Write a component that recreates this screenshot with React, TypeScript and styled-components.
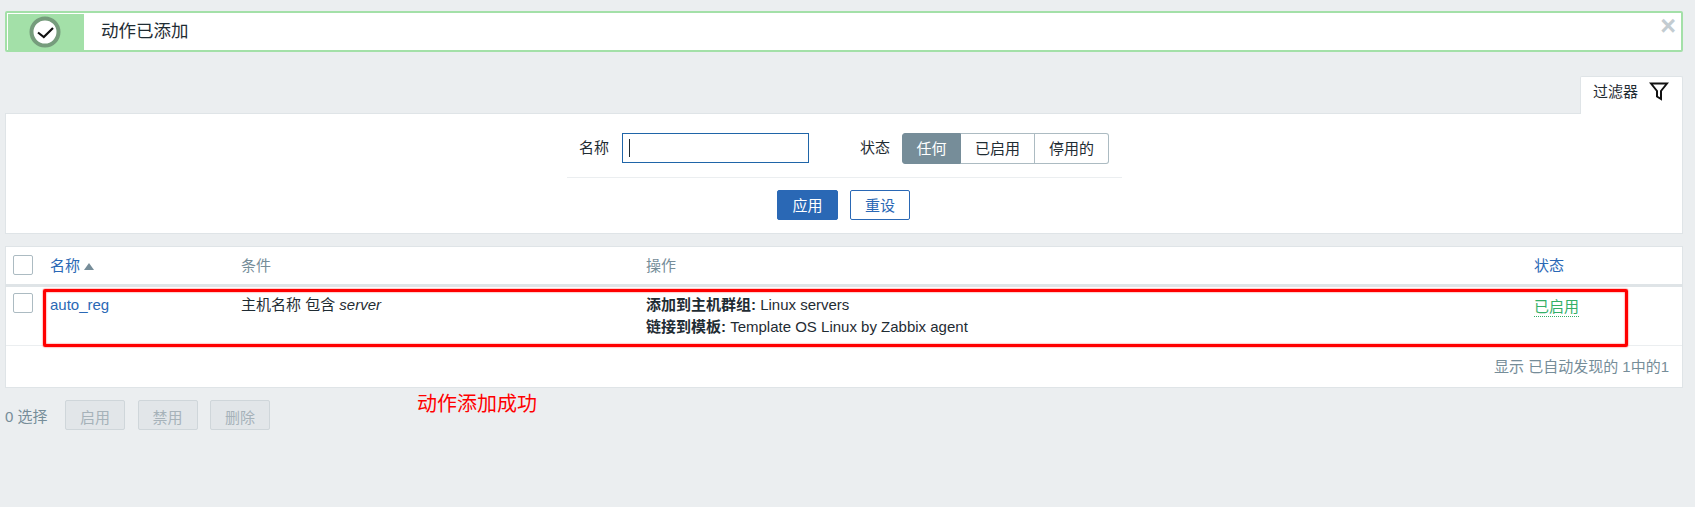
import React from "react"
import styled, { createGlobalStyle } from "styled-components"

const GlobalStyle = createGlobalStyle`
  html, body {
    margin: 0;
    padding: 0;
    background: #ebeef0;
  }
  body {
    font-family: "Liberation Sans", "Noto Sans CJK SC", sans-serif;
    font-size: 15px;
    color: #1f2c33;
  }
`

const Page = styled.div`
  position: relative;
  box-sizing: border-box;
  height: 507px;
  padding: 11px 12px 0 5px;
`

const Message = styled.div`
  position: relative;
  box-sizing: border-box;
  display: flex;
  align-items: stretch;
  height: 41px;
  background: #fff;
  border: 2px solid #a3e0a8;
  border-radius: 2px;
  padding: 1px 0 0 1px;
`

const MessageIcon = styled.div`
  display: flex;
  align-items: center;
  justify-content: center;
  width: 76px;
  padding-right: 3px;
  box-sizing: border-box;
  background: #a3e0a8;
`

const MessageText = styled.div`
  margin-left: 17px;
  font-size: 17.5px;
  line-height: 34px;
  color: #1f2c33;
`

const CloseMark = styled.div`
  position: absolute;
  top: 1px;
  right: 5px;
  font-size: 27px;
  line-height: 24px;
  font-weight: bold;
  color: #c3ccd1;
`

const FilterTabRow = styled.div`
  display: flex;
  justify-content: flex-end;
  margin-top: 24px;
`

const FilterTab = styled.div`
  position: relative;
  z-index: 1;
  box-sizing: border-box;
  display: flex;
  align-items: flex-start;
  width: 103px;
  height: 38px;
  margin-bottom: -1px;
  padding: 5px 0 0 12px;
  background: #fff;
  border: 1px solid #dfe4e7;
  border-bottom: 0;
  border-radius: 2px 2px 0 0;
  line-height: 20px;
  color: #1f2c33;
  svg {
    margin: -1px 0 0 11px;
  }
`

const FilterPanel = styled.div`
  box-sizing: border-box;
  height: 121px;
  background: #fff;
  border: 1px solid #dfe4e7;
  padding-top: 19px;
`

const FilterForm = styled.div`
  box-sizing: border-box;
  display: flex;
  align-items: flex-start;
  width: 555px;
  height: 45px;
  margin-left: 561px;
  padding-left: 12px;
  border-bottom: 1px solid #ebeef0;
`

const FieldLabel = styled.label<{ $gap: number }>`
  line-height: 30px;
  margin-right: ${({ $gap }) => $gap}px;
  color: #1f2c33;
`

const InputBox = styled.div`
  position: relative;
  width: 187px;
  height: 30px;
  margin: 0 51px 0 1px;
  input {
    box-sizing: border-box;
    display: block;
    width: 100%;
    height: 100%;
    margin: 0;
    padding: 0 6px;
    background: #fff;
    border: 1px solid #1f65a8;
    border-radius: 0;
    outline: none;
  }
  &::after {
    content: "";
    position: absolute;
    left: 7px;
    top: 6px;
    width: 1px;
    height: 18px;
    background: #1f2c33;
  }
`

const Segments = styled.div`
  display: flex;
  height: 31px;
`

const Segment = styled.div<{ $active?: boolean; $width: number }>`
  box-sizing: border-box;
  width: ${({ $width }) => $width}px;
  text-align: center;
  line-height: 29px;
  border: 1px solid ${({ $active }) => ($active ? "#768d99" : "#acbbc2")};
  border-left-width: ${({ $active }) => ($active ? 1 : 0)}px;
  background: ${({ $active }) => ($active ? "#768d99" : "#fff")};
  color: ${({ $active }) => ($active ? "#fff" : "#1f2c33")};
  &:first-child {
    border-radius: 3px 0 0 3px;
  }
  &:last-child {
    border-radius: 0 3px 3px 0;
  }
`

const FormActions = styled.div`
  display: flex;
  gap: 12px;
  margin: 12px 0 0 771px;
`

const FormButton = styled.button<{ $primary?: boolean; $width: number }>`
  box-sizing: border-box;
  width: ${({ $width }) => $width}px;
  height: 30px;
  padding: 2px 0 0;
  font: inherit;
  line-height: 26px;
  border: 1px solid #2a68b5;
  border-radius: 2px;
  background: ${({ $primary }) => ($primary ? "#2a68b5" : "#fff")};
  color: ${({ $primary }) => ($primary ? "#fff" : "#2a68b5")};
`

const TablePanel = styled.div`
  box-sizing: border-box;
  height: 142px;
  margin-top: 12px;
  background: #fff;
  border: 1px solid #dfe4e7;
`

const TableRow = styled.div<{ $height: number; $rule: string }>`
  box-sizing: border-box;
  display: grid;
  grid-template-columns: 44px 191px 405px 888px 1fr;
  height: ${({ $height }) => $height}px;
  border-bottom: ${({ $rule }) => $rule};
`

const Cell = styled.div<{ $top: number }>`
  padding-top: ${({ $top }) => $top}px;
  line-height: 22px;
`

const CheckBox = styled.div<{ $top: number }>`
  box-sizing: border-box;
  width: 20px;
  height: 20px;
  margin: ${({ $top }) => $top}px 0 0 7px;
  background: #fff;
  border: 1px solid #acbbc2;
  border-radius: 2px;
`

const SortLink = styled.a`
  color: #2a68b5;
  text-decoration: none;
`

const SortArrow = styled.span`
  display: inline-block;
  margin-left: 4px;
  vertical-align: 1px;
  border-left: 5px solid transparent;
  border-right: 5px solid transparent;
  border-bottom: 7px solid #768d99;
`

const MutedHead = styled.span`
  color: #768d99;
`

const OperationLine = styled.div`
  color: #1f2c33;
`

const StatusOn = styled.span`
  color: #34af67;
  border-bottom: 1px dotted #34af67;
  line-height: 18px;
  display: inline-block;
`

const TableFooter = styled.div`
  padding: 11px 13px 0 0;
  text-align: right;
  line-height: 20px;
  color: #768d99;
`

const BulkBar = styled.div`
  display: flex;
  align-items: center;
  margin-top: 12px;
  color: #768d99;
`

const BulkCount = styled.span`
  width: 60px;
  padding-top: 1px;
`

const BulkButton = styled.button`
  box-sizing: border-box;
  width: 60px;
  height: 30px;
  margin-right: 12.5px;
  padding: 2px 0 0;
  font: inherit;
  background: #e2e6e9;
  border: 1px solid #cfd6da;
  border-radius: 2px;
  color: #a6b2b9;
`

// the red highlight and caption were painted onto the screenshot
const Highlight = styled.div`
  position: absolute;
  left: 43px;
  top: 289px;
  width: 1585px;
  height: 58px;
  box-sizing: border-box;
  border: 3px solid #ff0000;
  border-radius: 2px;
  box-shadow: 0 0 1.5px #ff0000, inset 0 0 1.5px #ff0000;
  pointer-events: none;
`

const Caption = styled.div`
  position: absolute;
  left: 417px;
  top: 390px;
  font-size: 20px;
  line-height: 28px;
  color: #ff0000;
`

function CheckIcon() {
  return (
    <svg width="32" height="32" viewBox="0 0 32 32">
      <circle cx="16" cy="16" r="13.500" fill="#fff" stroke="#769c7c" strokeWidth="4" />
      <path d="M9 16.500l5.800 4.500 9.200-9" fill="none" stroke="#111" strokeWidth="2.200" />
    </svg>
  )
}

function FunnelIcon() {
  return (
    <svg width="20" height="20" viewBox="0 0 20 20">
      <path d="M2 2.500h16l-6 7.500v8l-4-2.500V10z" fill="none" stroke="#111" strokeWidth="2" strokeLinejoin="miter" />
    </svg>
  )
}

export default function App() {
  return (
    <>
      <GlobalStyle />
      <Page>
        <Message>
          <MessageIcon>
            <CheckIcon />
          </MessageIcon>
          <MessageText>动作已添加</MessageText>
          <CloseMark>×</CloseMark>
        </Message>
        <FilterTabRow>
          <FilterTab>
            过滤器
            <FunnelIcon />
          </FilterTab>
        </FilterTabRow>
        <FilterPanel>
          <FilterForm>
            <FieldLabel $gap={12}>名称</FieldLabel>
            <InputBox>
              <input type="text" />
            </InputBox>
            <FieldLabel $gap={12}>状态</FieldLabel>
            <Segments>
              <Segment $active $width={59}>任何</Segment>
              <Segment $width={74}>已启用</Segment>
              <Segment $width={74}>停用的</Segment>
            </Segments>
          </FilterForm>
          <FormActions>
            <FormButton $primary $width={61}>应用</FormButton>
            <FormButton $width={60}>重设</FormButton>
          </FormActions>
        </FilterPanel>
        <TablePanel>
          <TableRow $height={40} $rule="3px solid #dfe4e7">
            <CheckBox $top={8} />
            <Cell $top={8}>
              <SortLink href="#">名称</SortLink>
              <SortArrow />
            </Cell>
            <Cell $top={8}><MutedHead>条件</MutedHead></Cell>
            <Cell $top={8}><MutedHead>操作</MutedHead></Cell>
            <Cell $top={8}><SortLink href="#">状态</SortLink></Cell>
          </TableRow>
          <TableRow $height={59} $rule="1px solid #ebeef0">
            <CheckBox $top={6} />
            <Cell $top={7}><SortLink href="#">auto_reg</SortLink></Cell>
            <Cell $top={7}>主机名称 包含 <em>server</em></Cell>
            <Cell $top={7}>
              <OperationLine><b>添加到主机群组:</b> Linux servers</OperationLine>
              <OperationLine><b>链接到模板:</b> Template OS Linux by Zabbix agent</OperationLine>
            </Cell>
            <Cell $top={9}><StatusOn>已启用</StatusOn></Cell>
          </TableRow>
          <TableFooter>显示 已自动发现的 1中的1</TableFooter>
        </TablePanel>
        <BulkBar>
          <BulkCount>0 选择</BulkCount>
          <BulkButton disabled>启用</BulkButton>
          <BulkButton disabled>禁用</BulkButton>
          <BulkButton disabled>删除</BulkButton>
        </BulkBar>
        <Highlight />
        <Caption>动作添加成功</Caption>
      </Page>
    </>
  )
}
